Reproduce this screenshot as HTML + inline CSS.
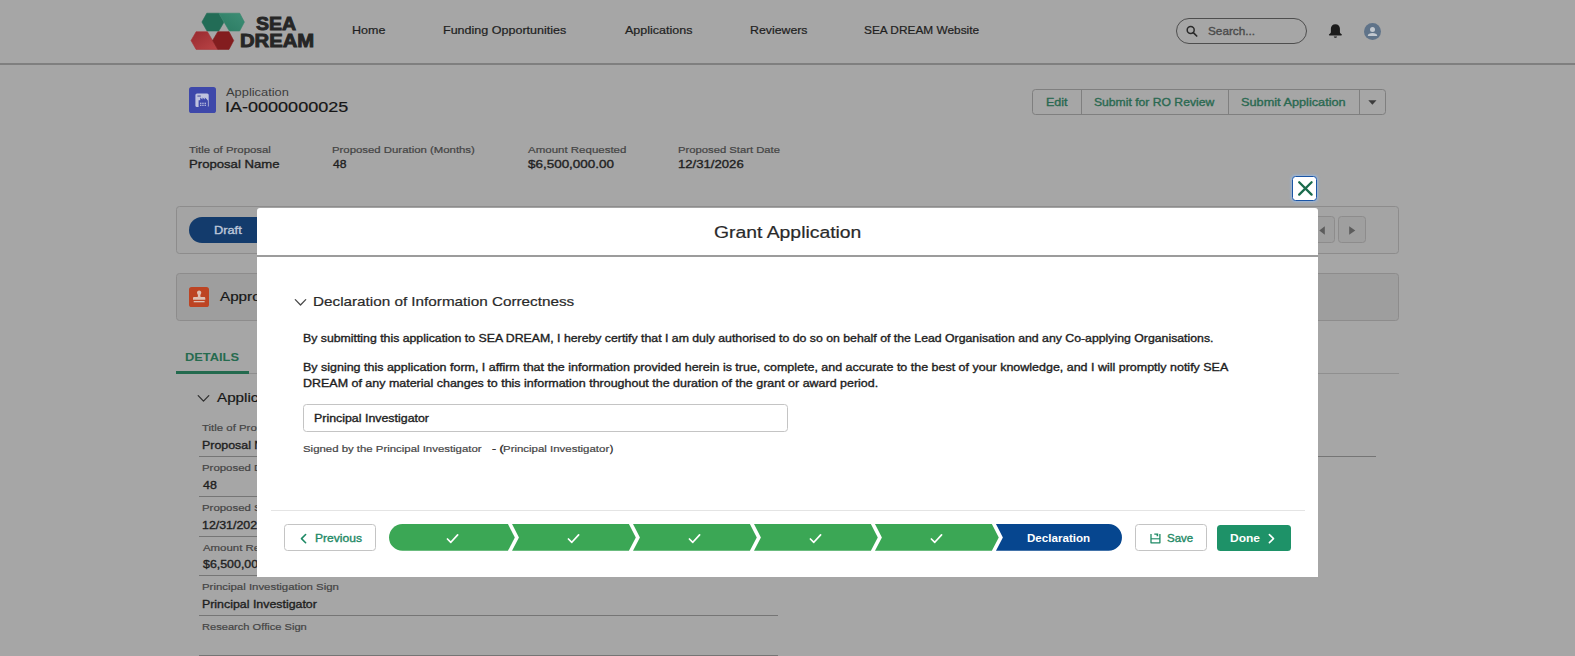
<!DOCTYPE html>
<html lang="en">
<head>
<meta charset="utf-8">
<title>Application IA-0000000025 | SEA DREAM</title>
<style>
html,body{margin:0;padding:0;background:#a6a6a6;}
body{font-family:"Liberation Sans",sans-serif;overflow:hidden;}
#root{position:relative;width:1575px;height:656px;overflow:hidden;background:#a6a6a6;}
#page,#modal-layer{position:absolute;left:0;top:0;width:1575px;height:656px;}
.t{position:absolute;white-space:pre;padding:0 3px;transform-origin:3px 50%;font-family:"Liberation Sans",sans-serif;}
.abs{position:absolute;box-sizing:border-box;}
.hline{position:absolute;height:1px;background:#757575;}
svg{position:absolute;overflow:visible;}

</style>
</head>
<body>
<div id="root">
<div id="page">
<!-- global header -->
<div class="abs" style="left:0;top:63.2px;width:1575px;height:1.7px;background:#7f7f7f"></div>
<svg style="left:0;top:0" width="330" height="64" viewBox="0 0 330 64">
  <defs>
    <linearGradient id="lg1" x1="0" y1="1" x2="1" y2="0"><stop offset="0" stop-color="#2b7a62"/><stop offset="1" stop-color="#3d8e75"/></linearGradient>
    <linearGradient id="lg2" x1="0" y1="0" x2="1" y2="1"><stop offset="0" stop-color="#962a2f"/><stop offset="1" stop-color="#bb4446"/></linearGradient>
  </defs>
  <polygon points="201.9,22 206.8,13.2 218.8,13.2 223.9,22.3 218.8,31 207,31" fill="#226c56" stroke="#226c56" stroke-width="0.6" stroke-linejoin="round"/>
  <polygon points="218.8,13.2 239.7,13.2 244.4,22.1 239.7,31 229.3,31" fill="url(#lg1)" stroke="#36866d" stroke-width="0.6" stroke-linejoin="round"/>
  <polygon points="191,40.6 196.1,31.7 207.4,31.7 217.8,49.4 196.1,49.4" fill="url(#lg2)" stroke="#a83338" stroke-width="0.6" stroke-linejoin="round"/>
  <polygon points="212.6,40.4 217.8,31.7 229,31.7 233.7,40.6 229,49.4 217.8,49.4" fill="#831d1f" stroke="#831d1f" stroke-width="0.6" stroke-linejoin="round"/>
</svg>
<!-- search -->
<div class="abs" style="left:1176px;top:18px;width:131px;height:26.4px;border:1px solid #4e4e4e;border-radius:13.2px"></div>
<svg style="left:1185px;top:24px" width="14" height="14" viewBox="0 0 14 14"><circle cx="5.7" cy="5.9" r="3.5" fill="none" stroke="#2a2a2a" stroke-width="1.5"/><path d="M8.3 8.6 L11.7 12" stroke="#2a2a2a" stroke-width="1.7" stroke-linecap="round"/></svg>
<!-- bell -->
<svg style="left:1326.6px;top:23.1px" width="16.8" height="16" viewBox="0 0 16 16" preserveAspectRatio="none"><path d="M8 1.2c-2.6 0-4.3 1.9-4.3 4.4v3.3c0 .9-.7 1.6-1.6 2.3-.5.4-.3 1.2.4 1.2h11c.7 0 .9-.8.4-1.2-.9-.7-1.6-1.400-1.600-2.300V5.600c0-2.500-1.700-4.400-4.300-4.400z" fill="#1c1c1c"/><path d="M6.500 13.400h3c0 .8-.7 1.300-1.500 1.300s-1.500-.5-1.500-1.300z" fill="#1c1c1c"/></svg>
<!-- avatar -->
<svg style="left:1364px;top:22.700px" width="17" height="17" viewBox="0 0 17 17"><circle cx="8.500" cy="8.500" r="8.500" fill="#5f7389"/><circle cx="8.500" cy="6.600" r="2.500" fill="#c2c8cf"/><path d="M3.800 12.800c0-2 2.100-2.900 4.700-2.900s4.700.9 4.700 2.900v.3H3.800z" fill="#c2c8cf"/></svg>

<!-- record header -->
<div class="abs" style="left:189.4px;top:87.3px;width:26.5px;height:26.1px;border-radius:2.6px;background:#3e48aa"></div>
<svg style="left:189.4px;top:87.3px" width="26.5" height="26.1" viewBox="0 0 26.5 26.1">
  <rect x="6.4" y="6.5" width="13.3" height="13.6" rx="1.6" fill="#c0c3de"/>
  <path d="M9.6 20.1v-6.9h1.6v-2.6l2.3 1.9v-1.9l2.3 1.9v-1.9l2.3 1.9v0.700h0.800v6.900z" fill="#3e48aa"/>
  <rect x="8.400" y="8.600" width="3.400" height="0.900" fill="#333b8c"/>
  <g fill="#c9cce6"><rect x="11.100" y="15.700" width="1.300" height="1.200"/><rect x="13.300" y="15.700" width="1.300" height="1.200"/><rect x="15.600" y="15.700" width="1.300" height="1.200"/><rect x="11.100" y="17.700" width="1.300" height="1.200"/><rect x="13.300" y="17.700" width="1.300" height="1.200"/><rect x="15.600" y="17.700" width="1.300" height="1.200"/></g>
</svg>
<!-- action buttons -->
<div class="abs" style="left:1032.300px;top:89px;width:353.400px;height:25.700px;border:1px solid #7f7f7f;border-radius:3.500px"></div>
<div class="abs" style="left:1080.700px;top:89px;width:1px;height:25.700px;background:#7f7f7f"></div>
<div class="abs" style="left:1227.700px;top:89px;width:1px;height:25.700px;background:#7f7f7f"></div>
<div class="abs" style="left:1359px;top:89px;width:1px;height:25.700px;background:#7f7f7f"></div>
<svg style="left:1368px;top:100.300px" width="9" height="5" viewBox="0 0 9 5"><path d="M0.300 0.200h8.200L4.400 4.700z" fill="#3c3c3c"/></svg>

<!-- path card -->
<div class="abs" style="left:176.200px;top:206px;width:1222.600px;height:47.600px;border:1px solid #8d8c8c;border-radius:3.500px;background:#a4a4a4"></div>
<div class="abs" style="left:188.800px;top:216.800px;width:100px;height:26.200px;border-radius:13.100px 0 0 13.100px;background:#133b6c"></div>
<div class="abs" style="left:1310px;top:216.400px;width:25px;height:26.200px;border:1px solid #8d8c8c;border-radius:3.500px;background:#9f9f9f"></div>
<div class="abs" style="left:1338.200px;top:216.400px;width:27.500px;height:26.200px;border:1px solid #8d8c8c;border-radius:3.500px;background:#9f9f9f"></div>
<svg style="left:1318.500px;top:225.800px" width="6" height="9" viewBox="0 0 6 9"><path d="M5.800 0.200v8.600L0.300 4.500z" fill="#5c5c5c"/></svg>
<svg style="left:1348.800px;top:225.800px" width="7" height="9" viewBox="0 0 7 9"><path d="M0.200 0.200v8.600L6.300 4.500z" fill="#5c5c5c"/></svg>

<!-- approvals card -->
<div class="abs" style="left:176.200px;top:273.200px;width:1222.600px;height:47.900px;border:1px solid #8d8c8c;border-radius:3.500px;background:#9e9e9e"></div>
<div class="abs" style="left:189.3px;top:287.3px;width:20.1px;height:19.6px;border-radius:2.6px;background:#bd4423"></div>
<svg style="left:189.2px;top:287.2px" width="20.3" height="19.8" viewBox="0 0 20.3 19.8">
  <path d="M10.150 3.600c1.300 0 2.150 1 2.150 2.100 0 .8-.5 1.400-.8 2.100-.3.700-.2 1.500.1 2.200h3.400c.8 0 1.300.5 1.300 1.300v1.500H4V11.300c0-.8.500-1.300 1.300-1.300h3.400c.3-.7.400-1.500.1-2.200-.3-.7-.8-1.300-.8-2.100 0-1.100.85-2.100 2.150-2.100z" fill="#dcc0b4"/>
  <rect x="4.700" y="14" width="10.900" height="1.300" fill="#dcc0b4"/>
</svg>

<!-- tabs -->
<div class="hline" style="left:176.200px;top:373.400px;width:1222.600px;background:#8f8f8f"></div>
<div class="abs" style="left:176.200px;top:371px;width:73.200px;height:3px;background:#236a4e"></div>
<!-- section chevron -->
<svg style="left:197px;top:393.500px" width="13" height="9" viewBox="0 0 13 9"><path d="M1.200 1.600L6.500 7.100L11.800 1.600" fill="none" stroke="#303030" stroke-width="1.300" stroke-linecap="round" stroke-linejoin="round"/></svg>
<!-- field underlines -->
<div class="hline" style="left:198.600px;top:456.100px;width:579px"></div>
<div class="hline" style="left:198.600px;top:495.800px;width:579px"></div>
<div class="hline" style="left:198.600px;top:535.500px;width:579px"></div>
<div class="hline" style="left:198.600px;top:575.200px;width:579px"></div>
<div class="hline" style="left:198.600px;top:614.900px;width:579px"></div>
<div class="hline" style="left:198.600px;top:654.600px;width:579px"></div>
<!-- right column line -->
<div class="hline" style="left:798px;top:455.900px;width:578px"></div>

<span class="t" id="t0" style="left:349.27px;top:25.00px;font-size:10.90px;line-height:10.90px;color:#1f1f1f;-webkit-text-stroke:0.2px currentColor;transform:translateY(-0.30px) scaleX(1.1480);">Home</span>
<span class="t" id="t1" style="left:440.23px;top:25.00px;font-size:10.90px;line-height:10.90px;color:#1f1f1f;-webkit-text-stroke:0.2px currentColor;transform:translateY(-0.30px) scaleX(1.1501);">Funding Opportunities</span>
<span class="t" id="t2" style="left:622.14px;top:25.00px;font-size:10.90px;line-height:10.90px;color:#1f1f1f;-webkit-text-stroke:0.2px currentColor;transform:translateY(-0.30px) scaleX(1.1475);">Applications</span>
<span class="t" id="t3" style="left:746.97px;top:25.00px;font-size:10.90px;line-height:10.90px;color:#1f1f1f;-webkit-text-stroke:0.2px currentColor;transform:translateY(-0.30px) scaleX(1.1309);">Reviewers</span>
<span class="t" id="t4" style="left:860.86px;top:25.00px;font-size:10.90px;line-height:10.90px;color:#1f1f1f;-webkit-text-stroke:0.2px currentColor;transform:translateY(-0.30px) scaleX(1.0886);">SEA DREAM Website</span>
<span class="t" id="t5" style="left:1205.35px;top:26.00px;font-size:10.90px;line-height:10.90px;color:#4a4a4a;-webkit-text-stroke:0.34px currentColor;transform:translateY(0.10px) scaleX(1.0797);">Search...</span>
<span class="t" id="t6" style="left:252.80px;top:15.00px;font-size:18.70px;line-height:18.70px;color:#262626;font-weight:700;-webkit-text-stroke:0.9px currentColor;transform:translateY(-0.40px) scaleX(1.0459);">SEA</span>
<span class="t" id="t7" style="left:237.20px;top:32.00px;font-size:18.20px;line-height:18.20px;color:#262626;font-weight:700;-webkit-text-stroke:0.9px currentColor;transform:translateY(-0.10px) scaleX(1.1127);">DREAM</span>
<span class="t" id="t8" style="left:223.30px;top:87.00px;font-size:10.60px;line-height:10.60px;color:#3d3d3d;transform:translateY(0.40px) scaleX(1.2142);">Application</span>
<span class="t" id="t9" style="left:222.11px;top:100.00px;font-size:14.60px;line-height:14.60px;color:#161616;-webkit-text-stroke:0.2px currentColor;transform:scaleX(1.2347);">IA-0000000025</span>
<span class="t" id="t10" style="left:185.70px;top:145.00px;font-size:9.75px;line-height:9.75px;color:#444444;-webkit-text-stroke:0.2px currentColor;transform:scaleX(1.1681);">Title of Proposal</span>
<span class="t" id="t11" style="left:186.04px;top:159.00px;font-size:11.40px;line-height:11.40px;color:#1f1f1f;-webkit-text-stroke:0.34px currentColor;transform:translateY(0.40px) scaleX(1.1530);">Proposal Name</span>
<span class="t" id="t12" style="left:328.52px;top:145.00px;font-size:9.75px;line-height:9.75px;color:#444444;-webkit-text-stroke:0.2px currentColor;transform:scaleX(1.1663);">Proposed Duration (Months)</span>
<span class="t" id="t13" style="left:330.08px;top:159.00px;font-size:11.40px;line-height:11.40px;color:#1f1f1f;-webkit-text-stroke:0.34px currentColor;transform:translateY(0.40px) scaleX(1.0641);">48</span>
<span class="t" id="t14" style="left:524.94px;top:145.00px;font-size:9.75px;line-height:9.75px;color:#444444;-webkit-text-stroke:0.2px currentColor;transform:scaleX(1.1788);">Amount Requested</span>
<span class="t" id="t15" style="left:524.93px;top:159.00px;font-size:11.40px;line-height:11.40px;color:#1f1f1f;-webkit-text-stroke:0.34px currentColor;transform:translateY(0.40px) scaleX(1.1798);">$6,500,000.00</span>
<span class="t" id="t16" style="left:675.13px;top:145.00px;font-size:9.75px;line-height:9.75px;color:#444444;-webkit-text-stroke:0.2px currentColor;transform:scaleX(1.1536);">Proposed Start Date</span>
<span class="t" id="t17" style="left:675.12px;top:159.00px;font-size:11.40px;line-height:11.40px;color:#1f1f1f;-webkit-text-stroke:0.34px currentColor;transform:translateY(0.40px) scaleX(1.1520);">12/31/2026</span>
<span class="t" id="t18" style="left:1043.09px;top:97.00px;font-size:10.60px;line-height:10.60px;color:#2a6951;-webkit-text-stroke:0.34px currentColor;transform:scaleX(1.1817);">Edit</span>
<span class="t" id="t19" style="left:1091.08px;top:97.00px;font-size:10.60px;line-height:10.60px;color:#2a6951;-webkit-text-stroke:0.34px currentColor;transform:scaleX(1.1472);">Submit for RO Review</span>
<span class="t" id="t20" style="left:1238.47px;top:97.00px;font-size:10.60px;line-height:10.60px;color:#2a6951;-webkit-text-stroke:0.34px currentColor;transform:scaleX(1.2012);">Submit Application</span>
<span class="t" id="t21" style="left:211.37px;top:226.00px;font-size:10.40px;line-height:10.40px;color:#bdc7d9;-webkit-text-stroke:0.34px currentColor;transform:scaleX(1.2313);">Draft</span>
<span class="t" id="t22" style="left:217.33px;top:290.00px;font-size:13.00px;line-height:13.00px;color:#161616;-webkit-text-stroke:0.2px currentColor;transform:translateY(-0.10px) scaleX(1.1700);">Approvals</span>
<span class="t" id="t23" style="left:182.08px;top:352.00px;font-size:10.70px;line-height:10.70px;color:#266b4f;font-weight:700;transform:translateY(0.30px) scaleX(1.2008);">DETAILS</span>
<span class="t" id="t24" style="left:213.93px;top:391.00px;font-size:13.00px;line-height:13.00px;color:#161616;-webkit-text-stroke:0.2px currentColor;transform:translateY(-0.30px) scaleX(1.1700);">Application Details</span>
<span class="t" id="t25" style="left:199.10px;top:423.00px;font-size:9.75px;line-height:9.75px;color:#444444;-webkit-text-stroke:0.2px currentColor;transform:translateY(0.40px) scaleX(1.1700);">Title of Proposal</span>
<span class="t" id="t26" style="left:198.70px;top:440.00px;font-size:10.60px;line-height:10.60px;color:#1f1f1f;-webkit-text-stroke:0.34px currentColor;transform:translateY(0.30px) scaleX(1.1700);">Proposal Name</span>
<span class="t" id="t27" style="left:198.72px;top:463.00px;font-size:9.75px;line-height:9.75px;color:#444444;-webkit-text-stroke:0.2px currentColor;transform:translateY(0.10px) scaleX(1.1700);">Proposed Duration (Months)</span>
<span class="t" id="t28" style="left:199.53px;top:480.00px;font-size:10.60px;line-height:10.60px;color:#1f1f1f;-webkit-text-stroke:0.34px currentColor;transform:scaleX(1.1700);">48</span>
<span class="t" id="t29" style="left:198.72px;top:503.00px;font-size:9.75px;line-height:9.75px;color:#444444;-webkit-text-stroke:0.2px currentColor;transform:translateY(-0.20px) scaleX(1.1700);">Proposed Start Date</span>
<span class="t" id="t30" style="left:198.74px;top:520.00px;font-size:10.60px;line-height:10.60px;color:#1f1f1f;-webkit-text-stroke:0.34px currentColor;transform:translateY(-0.30px) scaleX(1.1700);">12/31/2026</span>
<span class="t" id="t31" style="left:199.54px;top:542.00px;font-size:9.75px;line-height:9.75px;color:#444444;-webkit-text-stroke:0.2px currentColor;transform:translateY(0.50px) scaleX(1.1700);">Amount Requested</span>
<span class="t" id="t32" style="left:199.54px;top:559.00px;font-size:10.60px;line-height:10.60px;color:#1f1f1f;-webkit-text-stroke:0.34px currentColor;transform:translateY(0.40px) scaleX(1.1700);">$6,500,000.00</span>
<span class="t" id="t33" style="left:198.72px;top:582.00px;font-size:9.75px;line-height:9.75px;color:#444444;-webkit-text-stroke:0.2px currentColor;transform:translateY(0.20px) scaleX(1.1697);">Principal Investigation Sign</span>
<span class="t" id="t34" style="left:198.71px;top:599.00px;font-size:10.60px;line-height:10.60px;color:#1f1f1f;-webkit-text-stroke:0.34px currentColor;transform:translateY(0.10px) scaleX(1.1677);">Principal Investigator</span>
<span class="t" id="t35" style="left:198.74px;top:622.00px;font-size:9.75px;line-height:9.75px;color:#444444;-webkit-text-stroke:0.2px currentColor;transform:translateY(-0.10px) scaleX(1.1392);">Research Office Sign</span>
</div>
<div id="modal-layer">
<!-- close button -->
<div class="abs" style="left:1292px;top:176px;width:25.200px;height:25px;border:1.600px solid #1a55a6;border-radius:3.500px;background:#fff;box-shadow:0 0 2.500px 1px rgba(150,190,240,0.750)"></div>
<svg style="left:1297.800px;top:181px" width="15" height="15" viewBox="0 0 15 15"><path d="M1.200 1.200L13.600 13.600M13.600 1.200L1.200 13.600" stroke="#1a6b4c" stroke-width="2.300" stroke-linecap="round"/></svg>
<!-- modal -->
<div class="abs" style="left:257px;top:207.800px;width:1061px;height:369px;background:#fff;border-radius:3px 3px 0 0"></div>
<div class="abs" style="left:257px;top:255px;width:1061px;height:1.700px;background:#9c9c9c"></div>
<!-- section chevron -->
<svg style="left:293.500px;top:297.800px" width="13" height="9" viewBox="0 0 13 9"><path d="M1.300 1.600L6.500 7L11.700 1.600" fill="none" stroke="#4a4a4a" stroke-width="1.300" stroke-linecap="round" stroke-linejoin="round"/></svg>
<!-- input -->
<div class="abs" style="left:303.3px;top:404.2px;width:484.7px;height:27.5px;border:1px solid #c4c4c4;border-radius:3.500px;background:#fff"></div>
<!-- footer -->
<div class="abs" style="left:271px;top:510.3px;width:1033.6px;height:1px;background:#e4e4e4"></div>
<div class="abs" style="left:283.600px;top:524.300px;width:92.200px;height:26.400px;border:1px solid #c4c4c4;border-radius:3.500px;background:#fff"></div>
<svg style="left:299.500px;top:533px" width="7" height="11" viewBox="0 0 7 11"><path d="M5.600 1.500L1.500 5.600L5.600 9.700" fill="none" stroke="#1f8a66" stroke-width="1.600" stroke-linecap="round" stroke-linejoin="round"/></svg>
<!-- progress -->
<svg style="left:0;top:524.1px" width="1575" height="26.8" viewBox="0 524.1 1575 26.8">
  <g fill="#3ba755">
    <path d="M402.4 524.1H507.9L514.8 537.5L507.9 550.9H402.4A13.4 13.4 0 0 1 402.4 524.1z"/>
    <path d="M512.0 524.1H628.9L635.8 537.5L628.9 550.9H512.0L518.9 537.5z"/>
    <path d="M633.0 524.1H749.9L756.8 537.5L749.9 550.9H633.0L639.9 537.5z"/>
    <path d="M754.0 524.1H870.9L877.8 537.5L870.9 550.9H754.0L760.9 537.5z"/>
    <path d="M875.0 524.1H991.9L998.8 537.5L991.9 550.9H875.0L881.9 537.5z"/>
  </g>
  <path d="M996.0 524.1H1108.6A13.4 13.4 0 0 1 1108.6 550.9H996.0L1002.9 537.5z" fill="#06468f"/>
  <g fill="none" stroke="#ffffff" stroke-width="1.7" stroke-linecap="round" stroke-linejoin="round">
    <path d="M447.4 539.1L450.8 542.4L457.6 535"/>
    <path d="M568.4 539.1L571.8 542.4L578.6 535"/>
    <path d="M689.4 539.1L692.8 542.4L699.6 535"/>
    <path d="M810.4 539.1L813.8 542.4L820.6 535"/>
    <path d="M931.4 539.1L934.8 542.4L941.6 535"/>
  </g>
</svg>
<!-- save -->
<div class="abs" style="left:1135.200px;top:524.300px;width:71.800px;height:26.400px;border:1px solid #c4c4c4;border-radius:3.500px;background:#fff"></div>
<svg style="left:1149.600px;top:533.200px" width="11" height="11" viewBox="0 0 11 11"><path d="M1 0.900V9.800H9.900V0.900" fill="none" stroke="#1f8a66" stroke-width="1.300" stroke-linejoin="round"/><path d="M1 5.800H9.900" stroke="#1f8a66" stroke-width="1.100"/><path d="M4.300 0.400H8.200V3.200H6.600V1.700H4.300z" fill="#1f8a66"/></svg>
<!-- done -->
<div class="abs" style="left:1216.800px;top:524.500px;width:74.400px;height:26px;border-radius:3.500px;background:#1e9268"></div>
<svg style="left:1268.300px;top:533px" width="7" height="11" viewBox="0 0 7 11"><path d="M1.400 1.600L5.500 5.600L1.400 9.600" fill="none" stroke="#ffffff" stroke-width="1.600" stroke-linecap="round" stroke-linejoin="round"/></svg>

<span class="t" id="t36" style="left:711.30px;top:224.00px;font-size:16.25px;line-height:16.25px;color:#2a2a2a;-webkit-text-stroke:0.2px currentColor;transform:translateY(-0.10px) scaleX(1.1907);">Grant Application</span>
<span class="t" id="t37" style="left:309.71px;top:295.00px;font-size:13.00px;line-height:13.00px;color:#2a2a2a;-webkit-text-stroke:0.2px currentColor;transform:scaleX(1.1735);">Declaration of Information Correctness</span>
<span class="t" id="t38" style="left:299.51px;top:333.00px;font-size:10.60px;line-height:10.60px;color:#1e1e1e;-webkit-text-stroke:0.34px currentColor;transform:translateY(-0.40px) scaleX(1.1599);">By submitting this application to SEA DREAM, I hereby certify that I am duly authorised to do so on behalf of the Lead Organisation and any Co-applying Organisations.</span>
<span class="t" id="t39" style="left:300.39px;top:362.00px;font-size:10.60px;line-height:10.60px;color:#1e1e1e;-webkit-text-stroke:0.34px currentColor;transform:translateY(0.20px) scaleX(1.1773);">By signing this application form, I affirm that the information provided herein is true, complete, and accurate to the best of your knowledge, and I will promptly notify SEA</span>
<span class="t" id="t40" style="left:300.39px;top:378.00px;font-size:10.60px;line-height:10.60px;color:#1e1e1e;-webkit-text-stroke:0.34px currentColor;transform:translateY(0.10px) scaleX(1.1768);">DREAM of any material changes to this information throughout the duration of the grant or award period.</span>
<span class="t" id="t41" style="left:311.11px;top:413.00px;font-size:10.60px;line-height:10.60px;color:#1e1e1e;-webkit-text-stroke:0.34px currentColor;transform:translateY(-0.40px) scaleX(1.1694);">Principal Investigator</span>
<span class="t" id="t42" style="left:299.76px;top:444.00px;font-size:9.75px;line-height:9.75px;color:#454545;-webkit-text-stroke:0.2px currentColor;transform:scaleX(1.1685);">Signed by the Principal Investigator</span>
<span class="t" id="t43" style="left:488.50px;top:444.00px;font-size:9.75px;line-height:9.75px;color:#222;-webkit-text-stroke:0.34px currentColor;transform:scaleX(1.2496);">- (</span>
<span class="t" id="t44" style="left:500.30px;top:444.00px;font-size:9.75px;line-height:9.75px;color:#454545;-webkit-text-stroke:0.2px currentColor;transform:scaleX(1.1733);">Principal Investigator</span>
<span class="t" id="t45" style="left:606.80px;top:444.00px;font-size:9.75px;line-height:9.75px;color:#222;-webkit-text-stroke:0.34px currentColor;transform:scaleX(0.9846);">)</span>
<span class="t" id="t46" style="left:311.70px;top:533.00px;font-size:10.60px;line-height:10.60px;color:#1f8a66;-webkit-text-stroke:0.34px currentColor;transform:translateY(-0.40px) scaleX(1.1396);">Previous</span>
<span class="t" id="t47" style="left:1023.50px;top:533.00px;font-size:10.80px;line-height:10.80px;color:#ffffff;font-weight:700;transform:translateY(-0.40px) scaleX(1.0739);">Declaration</span>
<span class="t" id="t48" style="left:1163.53px;top:533.00px;font-size:10.60px;line-height:10.60px;color:#1f8a66;-webkit-text-stroke:0.34px currentColor;transform:translateY(-0.40px) scaleX(1.0861);">Save</span>
<span class="t" id="t49" style="left:1226.72px;top:533.00px;font-size:10.80px;line-height:10.80px;color:#ffffff;font-weight:700;transform:translateY(-0.40px) scaleX(1.1130);">Done</span>
</div>
</div>
</body>
</html>
